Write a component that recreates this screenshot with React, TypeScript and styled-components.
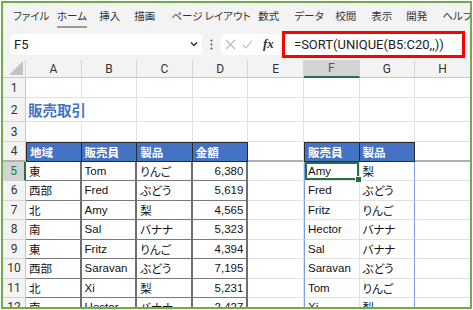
import React from 'react';
import styled, { createGlobalStyle, css } from 'styled-components';

const GlobalStyle = createGlobalStyle`
  html, body { margin: 0; padding: 0; background: #fff; }
  body { font-family: "Liberation Sans", "Noto Sans CJK JP", sans-serif; }
`;

const JP = `"Noto Sans CJK JP", "Liberation Sans", sans-serif`;
const CELL_FONT = `"Liberation Sans", "Noto Sans CJK JP", sans-serif`;
const UI_FONT = `Roboto, "Noto Sans CJK JP", sans-serif`;

const Frame = styled.div`
  margin: 1px 0 0 1px;
  width: 471px;
  height: 308px;
  box-sizing: border-box;
  border: 2px solid #70ad47;
  overflow: hidden;
  display: flex;
  flex-direction: column;
  background: #fff;
`;

const MenuBar = styled.div`
  flex: none;
  height: 25px;
  background: #f3f3f3;
  display: flex;
  align-items: center;
  padding-left: 10px;
  font-family: ${JP};
  font-feature-settings: "palt";
  font-size: 10.5px;
  color: #333;
  white-space: nowrap;
  overflow: hidden;
`;

const MenuItem = styled.div<{ $w: number }>`
  flex: none;
  width: ${p => p.$w}px;
`;

const MenuLabel = styled.span<{ $active?: boolean }>`
  position: relative;
  display: inline-block;
  line-height: 14px;
  ${p => p.$active && css`
    &::after {
      content: '';
      position: absolute;
      left: 0;
      right: 0;
      bottom: -5px;
      height: 2px;
      background: #9a9a9a;
    }
  `}
`;

const FormulaRow = styled.div`
  flex: none;
  height: 32px;
  background: #f3f3f3;
  display: flex;
  align-items: center;
  padding-left: 7px;
`;

const NameBox = styled.div`
  width: 192px;
  height: 21px;
  box-sizing: border-box;
  background: #fff;
  border-radius: 4px;
  display: flex;
  align-items: center;
  justify-content: space-between;
  padding: 0 4px 0 4px;
  font-family: ${UI_FONT};
  font-size: 13px;
  color: #222;
`;

const Dots = styled.div`
  width: 19px;
  height: 21px;
  display: flex;
  align-items: center;
  justify-content: center;
`;

const FxBox = styled.div`
  width: 59px;
  height: 21px;
  background: #fff;
  border-radius: 4px 0 0 4px;
  display: flex;
  align-items: center;
  padding-left: 4px;
  box-sizing: border-box;
  gap: 6px;
`;

const FxLabel = styled.span`
  font-family: "Liberation Serif", serif;
  font-style: italic;
  font-weight: bold;
  font-size: 13px;
  color: #333;
  margin-left: 4px;
`;

const FormulaBox = styled.div`
  margin-left: 2px;
  width: 183px;
  height: 27px;
  box-sizing: border-box;
  border: 3px solid #ff0000;
  background: #fff;
  display: flex;
  align-items: center;
  padding-left: 9px;
  font-family: ${UI_FONT};
  font-size: 13px;
  color: #222;
  white-space: nowrap;
`;

const Sheet = styled.div`
  display: grid;
  grid-template-columns: 23px repeat(8, 55.6px);
  grid-template-rows: 18px 20px 24px 20px repeat(9, 19.5px);
  background: #fff;
`;

const Corner = styled.div`
  background: #f3f3f3;
  border-right: 1px solid #d4d4d4;
  border-bottom: 1px solid #c8c8c8;
  box-sizing: border-box;
  display: flex;
  align-items: flex-end;
  justify-content: flex-end;
  padding: 0 2px 2px 0;
`;

const ColHead = styled.div<{ $active?: boolean }>`
  box-sizing: border-box;
  background: ${p => (p.$active ? '#d3d3d3' : '#f3f3f3')};
  color: ${p => (p.$active ? '#217346' : '#333')};
  border-right: 1px solid #d4d4d4;
  border-bottom: ${p => (p.$active ? '2px solid #217346' : '1px solid #c8c8c8')};
  display: flex;
  align-items: center;
  justify-content: center;
  font-family: ${UI_FONT};
  font-size: 12px;
`;

const RowHead = styled.div<{ $active?: boolean; $freeze?: boolean }>`
  box-sizing: border-box;
  background: ${p => (p.$active ? '#d3d3d3' : '#f3f3f3')};
  color: ${p => (p.$active ? '#217346' : '#333')};
  border-right: ${p => (p.$active ? '2px solid #217346' : '1px solid #c8c8c8')};
  border-bottom: ${p => (p.$freeze ? '2px solid #b0b0b0' : '1px solid #d4d4d4')};
  display: flex;
  align-items: center;
  justify-content: center;
  font-family: ${UI_FONT};
  font-size: 12px;
`;

type Kind = 'grid' | 'freeze' | 'head' | 'data' | 'spillL' | 'spillR';

const kindStyles: Record<Kind, ReturnType<typeof css>> = {
  grid: css`
    border-right: 1px solid #e1e1e1;
    border-bottom: 1px solid #e1e1e1;
  `,
  freeze: css`
    border-right: 1px solid #e1e1e1;
    border-bottom: 2px solid #b0b0b0;
  `,
  head: css`
    background: #4472c4;
    color: #fff;
    font-weight: bold;
    border-top: 1px solid #2b2b2b;
    border-right: 1px solid #2b2b2b;
    border-bottom: 1px solid #2b2b2b;
  `,
  data: css`
    border-right: 2px solid #6e6e6e;
    border-bottom: 1px solid #7a7a7a;
  `,
  spillL: css`
    border-left: 1px solid #7d9be0;
    border-right: 1px solid #e1e1e1;
    border-bottom: 1px solid #e1e1e1;
  `,
  spillR: css`
    border-right: 1px solid #7d9be0;
    border-bottom: 1px solid #e1e1e1;
  `,
};

const Cell = styled.div<{ $kind: Kind; $num?: boolean; $selected?: boolean; $leftEdge?: boolean }>`
  position: relative;
  box-sizing: border-box;
  display: flex;
  align-items: center;
  justify-content: ${p => (p.$num ? 'flex-end' : 'flex-start')};
  padding: ${p => (p.$num ? '0 3px 0 0' : '0 0 0 3px')};
  font-family: ${CELL_FONT};
  font-feature-settings: "palt";
  font-size: 11.5px;
  color: #111;
  white-space: nowrap;
  ${p => kindStyles[p.$kind]}
  ${p => p.$leftEdge && css`border-left: 1px solid #2b2b2b;`}
  ${p => p.$selected && css`
    z-index: 2;
    box-shadow: inset 0 0 0 2px #217346;
    &::after {
      content: '';
      position: absolute;
      right: -3px;
      bottom: -3px;
      width: 5px;
      height: 5px;
      background: #217346;
      border: 1px solid #fff;
    }
  `}
`;

const Title = styled.div`
  grid-column: span 2;
  box-sizing: border-box;
  display: flex;
  align-items: center;
  padding-left: 2px;
  font-family: ${JP};
  font-size: 14.5px;
  font-weight: bold;
  color: #4472c4;
  border-right: 1px solid #e1e1e1;
  border-bottom: 1px solid #e1e1e1;
  white-space: nowrap;
`;

const cols = ['A', 'B', 'C', 'D', 'E', 'F', 'G', 'H'];
const menu: [string, number][] = [
  ['ファイル', 44],
  ['ホーム', 42.3],
  ['挿入', 35],
  ['描画', 37],
  ['ページ レイアウト', 87],
  ['数式', 36],
  ['データ', 41],
  ['校閲', 36],
  ['表示', 35],
  ['開発', 36],
  ['ヘルプ', 40],
];

const t1 = [
  ['東', 'Tom', 'りんご', '6,380'],
  ['西部', 'Fred', 'ぶどう', '5,619'],
  ['北', 'Amy', '梨', '4,565'],
  ['南', 'Sal', 'バナナ', '5,323'],
  ['東', 'Fritz', 'りんご', '4,394'],
  ['西部', 'Saravan', 'ぶどう', '7,195'],
  ['北', 'Xi', '梨', '5,231'],
  ['南', 'Hector', 'バナナ', '2,427'],
];

const t2 = [
  ['Amy', '梨'],
  ['Fred', 'ぶどう'],
  ['Fritz', 'りんご'],
  ['Hector', 'バナナ'],
  ['Sal', 'バナナ'],
  ['Saravan', 'ぶどう'],
  ['Tom', 'りんご'],
  ['Xi', '梨'],
];

const blankRow = (r: number) => (
  <React.Fragment key={`r${r}`}>
    <RowHead>{r}</RowHead>
    {cols.map(c => (
      <Cell key={c} $kind="grid" />
    ))}
  </React.Fragment>
);

export default function App() {
  return (
    <>
      <GlobalStyle />
      <Frame>
        <MenuBar>
          {menu.map(([m, w]) => (
            <MenuItem key={m} $w={w}>
              <MenuLabel $active={m === 'ホーム'}>{m}</MenuLabel>
            </MenuItem>
          ))}
        </MenuBar>
        <FormulaRow>
          <NameBox>
            <span>F5</span>
            <svg width="8" height="6" viewBox="0 0 8 6">
              <path d="M1 1.5 L4 4.5 L7 1.5" fill="none" stroke="#333" strokeWidth="1.5" />
            </svg>
          </NameBox>
          <Dots>
            <svg width="3" height="11" viewBox="0 0 3 11">
              <circle cx="1.5" cy="1.5" r="1" fill="#555" />
              <circle cx="1.5" cy="5.5" r="1" fill="#555" />
              <circle cx="1.5" cy="9.5" r="1" fill="#555" />
            </svg>
          </Dots>
          <FxBox>
            <svg width="11" height="11" viewBox="0 0 11 11">
              <path d="M1 1 L10 10 M10 1 L1 10" stroke="#b8b8b8" strokeWidth="1.1" />
            </svg>
            <svg width="11" height="11" viewBox="0 0 11 11">
              <path d="M1 6 L4 9 L10 1.5" fill="none" stroke="#b8b8b8" strokeWidth="1.1" />
            </svg>
            <FxLabel>fx</FxLabel>
          </FxBox>
          <FormulaBox>=SORT(UNIQUE(B5:C20,,))</FormulaBox>
        </FormulaRow>
        <Sheet>
          <Corner>
            <svg width="14" height="14" viewBox="0 0 14 14">
              <path d="M14 0 L14 14 L0 14 Z" fill="#c2c2c2" />
            </svg>
          </Corner>
          {cols.map(c => (
            <ColHead key={c} $active={c === 'F'}>
              {c}
            </ColHead>
          ))}

          {blankRow(1)}

          <RowHead>2</RowHead>
          <Title>販売取引</Title>
          {cols.slice(2).map(c => (
            <Cell key={`2${c}`} $kind="grid" />
          ))}

          {blankRow(3)}

          <RowHead $freeze>4</RowHead>
          {['地域', '販売員', '製品', '金額'].map((h, i) => (
            <Cell key={`h${h}`} $kind="head" $leftEdge={i === 0}>
              {h}
            </Cell>
          ))}
          <Cell $kind="freeze" />
          <Cell $kind="head" $leftEdge>販売員</Cell>
          <Cell $kind="head">製品</Cell>
          <Cell $kind="freeze" />

          {t1.map((row, i) => {
            const r = i + 5;
            return (
              <React.Fragment key={`row${r}`}>
                <RowHead $active={r === 5}>{r}</RowHead>
                <Cell $kind="data">{row[0]}</Cell>
                <Cell $kind="data">{row[1]}</Cell>
                <Cell $kind="data">{row[2]}</Cell>
                <Cell $kind="data" $num>
                  {row[3]}
                </Cell>
                <Cell $kind="grid" />
                <Cell $kind="spillL" $selected={r === 5}>
                  {t2[i][0]}
                </Cell>
                <Cell $kind="spillR">{t2[i][1]}</Cell>
                <Cell $kind="grid" />
              </React.Fragment>
            );
          })}
        </Sheet>
      </Frame>
    </>
  );
}
